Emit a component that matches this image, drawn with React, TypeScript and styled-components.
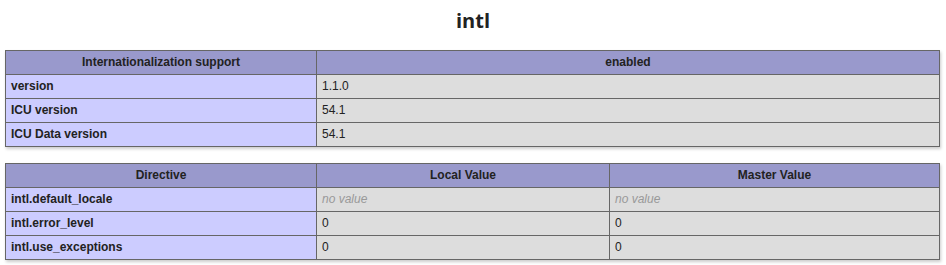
import styled, { createGlobalStyle } from "styled-components";

const Global = createGlobalStyle`
  body {
    margin: 0;
    background: #fff;
    color: #222;
    font-family: "Liberation Sans", Arial, sans-serif;
  }
`;

const Page = styled.div`
  width: 946px;
`;

const Title = styled.h2`
  margin: 9px 0 17px;
  font-family: "Open Sans", "Liberation Sans", sans-serif;
  font-size: 20px;
  line-height: 24px;
  font-weight: bold;
  text-align: center;
`;

const Table = styled.table`
  border-collapse: collapse;
  border: 0;
  width: 934px;
  table-layout: fixed;
  margin: 0 0 16px 5px;
  box-shadow: 1px 2px 3px #ccc;
  text-align: left;
`;

const Col = styled.col<{ $w: number }>`
  width: ${(p) => p.$w}px;
`;

const Head = styled.th`
  border: 1px solid #666;
  background: #99c;
  font-size: 12px;
  line-height: 15px;
  font-weight: bold;
  text-align: center;
  vertical-align: baseline;
  padding: 4px 5px;
`;

const Key = styled.td`
  border: 1px solid #666;
  background: #ccf;
  font-size: 12px;
  line-height: 15px;
  font-weight: bold;
  vertical-align: baseline;
  padding: 4px 5px;
`;

const Value = styled.td`
  border: 1px solid #666;
  background: #ddd;
  font-size: 12px;
  line-height: 15px;
  vertical-align: baseline;
  padding: 4px 5px;
  word-wrap: break-word;

  i {
    color: #999;
  }
`;

const info = [
  ["version", "1.1.0"],
  ["ICU version", "54.1"],
  ["ICU Data version", "54.1"],
];

const directives: [string, string | null, string | null][] = [
  ["intl.default_locale", null, null],
  ["intl.error_level", "0", "0"],
  ["intl.use_exceptions", "0", "0"],
];

function Cell({ v }: { v: string | null }) {
  return <Value>{v === null ? <i>no value</i> : v}</Value>;
}

export default function App() {
  return (
    <Page>
      <Global />
      <Title>intl</Title>
      <Table>
        <colgroup>
          <Col $w={311} />
          <Col $w={623} />
        </colgroup>
        <thead>
          <tr>
            <Head>Internationalization support</Head>
            <Head>enabled</Head>
          </tr>
        </thead>
        <tbody>
          {info.map(([k, v]) => (
            <tr key={k}>
              <Key>{k}</Key>
              <Value>{v}</Value>
            </tr>
          ))}
        </tbody>
      </Table>
      <Table>
        <colgroup>
          <Col $w={311} />
          <Col $w={293} />
          <Col $w={330} />
        </colgroup>
        <thead>
          <tr>
            <Head>Directive</Head>
            <Head>Local Value</Head>
            <Head>Master Value</Head>
          </tr>
        </thead>
        <tbody>
          {directives.map(([k, local, master]) => (
            <tr key={k}>
              <Key>{k}</Key>
              <Cell v={local} />
              <Cell v={master} />
            </tr>
          ))}
        </tbody>
      </Table>
    </Page>
  );
}
